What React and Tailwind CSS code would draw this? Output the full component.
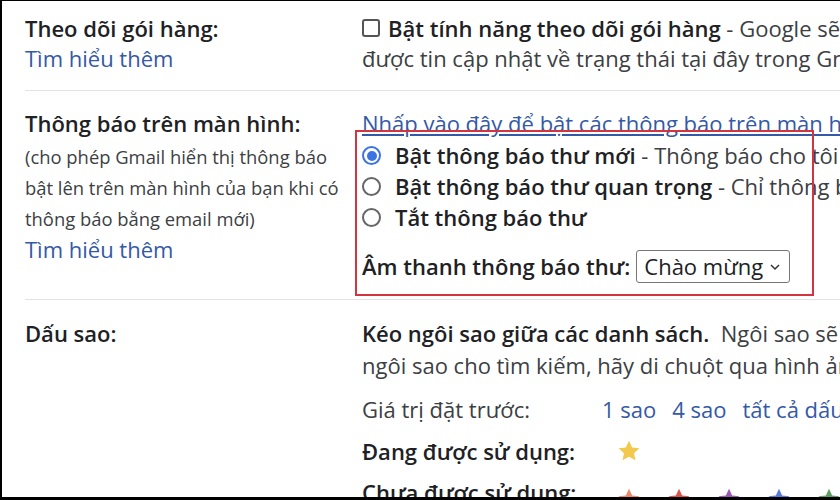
import React from "react";

const font = { fontFamily: "'Open Sans', 'Noto Sans', sans-serif" };

function Star({ color }) {
  return (
    <svg viewBox="0 0 24 24" className="w-[26px] h-[26px] shrink-0">
      <path
        d="M12 2.5l2.9 6.2 6.7.7-5 4.6 1.4 6.6L12 17.3l-6 3.3 1.4-6.6-5-4.6 6.7-.7z"
        fill={color}
      />
    </svg>
  );
}

function Radio({ checked }) {
  return (
    <span
      className={
        "inline-flex items-center justify-center w-[19px] h-[19px] rounded-full border-2 mr-[14px] shrink-0 " +
        (checked ? "border-[#3b73e0]" : "border-[#666]")
      }
    >
      {checked && <span className="w-[10px] h-[10px] rounded-full bg-[#3b73e0]" />}
    </span>
  );
}

export default function App() {
  return (
    <div
      className="relative w-[840px] h-[500px] bg-white overflow-hidden border-l-2 border-b-[3px] border-t border-black text-[#202124]"
      style={font}
    >
      {/* Theo dõi gói hàng */}
      <div className="flex pt-[12px] pb-[17px] pl-[23px]">
        <div className="w-[337px] shrink-0">
          <div className="text-[22px] font-semibold leading-[30px]">Theo dõi gói hàng:</div>
          <div className="text-[22px] leading-[30px] text-[#3459a6]">Tìm hiểu thêm</div>
        </div>
        <div className="text-[22px] leading-[30px] whitespace-nowrap overflow-hidden">
          <div className="flex items-center">
            <span className="w-[18px] h-[18px] border-2 border-[#555] rounded-[3px] mr-[8px] shrink-0" />
            <span className="font-semibold">Bật tính năng theo dõi gói hàng</span>
            <span className="text-[#3c4043]">&nbsp;- Google sẽ hiển thị trạng thái</span>
          </div>
          <div className="text-[#3c4043]">được tin cập nhật về trạng thái tại đây trong Gmail</div>
        </div>
      </div>
      <div className="ml-[23px] h-px bg-[#e3e3e3]" />

      {/* Thông báo trên màn hình */}
      <div className="flex pt-[17px] pb-[16px] pl-[23px]">
        <div className="w-[337px] shrink-0">
          <div className="text-[22px] font-semibold leading-[30px]">Thông báo trên màn hình:</div>
          <div className="text-[18.4px] leading-[31px] mt-[3px] text-[#3c4043]">
            (cho phép Gmail hiển thị thông báo
            <br />
            bật lên trên màn hình của bạn khi có
            <br />
            thông báo bằng email mới)
          </div>
          <div className="text-[22px] leading-[30px] text-[#3459a6]">Tìm hiểu thêm</div>
        </div>
        <div className="text-[22px] whitespace-nowrap overflow-hidden">
          <div className="leading-[30px] text-[#3459a6] underline underline-offset-2">
            Nhấp vào đây để bật các thông báo trên màn hình cho Gmail.
          </div>
          <div className="mt-[2px] leading-[31px]">
            <div className="flex items-center">
              <Radio checked />
              <span className="font-semibold">Bật thông báo thư mới</span>
              <span className="text-[#3c4043]">&nbsp;- Thông báo cho tôi khi có thư mới</span>
            </div>
            <div className="flex items-center">
              <Radio />
              <span className="font-semibold">Bật thông báo thư quan trọng</span>
              <span className="text-[#3c4043]">&nbsp;- Chỉ thông báo cho tôi</span>
            </div>
            <div className="flex items-center">
              <Radio />
              <span className="font-semibold">Tắt thông báo thư</span>
            </div>
          </div>
          <div className="mt-[17px] flex items-center h-[33px]">
            <span className="font-semibold">Âm thanh thông báo thư:</span>
            <span className="ml-[6px] h-[33px] w-[154px] shrink-0 border border-[#767676] rounded-[3px] flex items-center pl-[7px] pr-[8px] justify-between">
              <span>Chào mừng</span>
              <svg viewBox="0 0 12 12" className="w-[12px] h-[12px]">
                <path d="M2 4l4 4 4-4" fill="none" stroke="#333" strokeWidth="1.5" />
              </svg>
            </span>
          </div>
        </div>
      </div>
      <div className="ml-[23px] h-px bg-[#e3e3e3]" />

      {/* Dấu sao */}
      <div className="flex pt-[17px] pl-[23px]">
        <div className="w-[337px] shrink-0">
          <div className="text-[22px] font-semibold leading-[32px]">Dấu sao:</div>
        </div>
        <div className="text-[22px] whitespace-nowrap overflow-hidden">
          <div className="leading-[32px]">
            <span className="font-semibold">Kéo ngôi sao giữa các danh sách.</span>
            <span className="text-[#3c4043]">&nbsp; Ngôi sao sẽ xoay vòng theo thứ tự</span>
          </div>
          <div className="leading-[32px] text-[#3c4043]">
            ngôi sao cho tìm kiếm, hãy di chuột qua hình ảnh của ngôi sao
          </div>
          <div className="mt-[13px] leading-[30px] flex text-[#3c4043]">
            <span className="w-[240px] shrink-0">Giá trị đặt trước:</span>
            <span className="shrink-0 text-[#3459a6]">1 sao</span>
            <span className="shrink-0 ml-[16px] text-[#3459a6]">4 sao</span>
            <span className="shrink-0 ml-[16px] text-[#3459a6]">tất cả dấu sao</span>
          </div>
          <div className="mt-[12px] leading-[30px] flex items-center">
            <span className="w-[254px] shrink-0 font-semibold">Đang được sử dụng:</span>
            <Star color="#f2c94c" />
          </div>
          <div className="mt-[11px] leading-[30px] flex items-start">
            <span className="w-[254px] shrink-0 font-semibold">Chưa được sử dụng:</span>
            <div className="flex gap-[24px] mt-[9px] shrink-0">
              <Star color="#e8896a" />
              <Star color="#d9534f" />
              <Star color="#9b59b6" />
              <Star color="#5b7bd5" />
              <Star color="#5e9e63" />
            </div>
          </div>
        </div>
      </div>

      {/* annotation box */}
      <div className="absolute left-[353px] top-[129px] w-[459px] h-[166px] border-2 border-[#d2353f]" />
    </div>
  );
}
